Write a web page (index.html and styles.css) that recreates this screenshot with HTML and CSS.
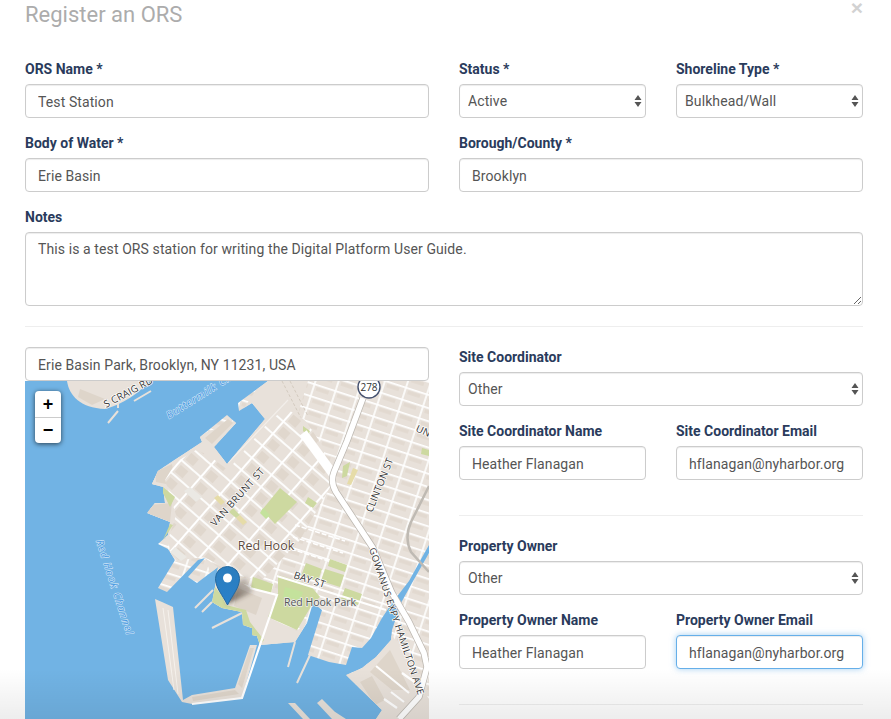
FILE: index.html
```html
<!DOCTYPE html>
<html lang="en">
<head>
<meta charset="utf-8">
<title>Register an ORS</title>
<link rel="stylesheet" href="styles.css">
</head>
<body>
<main class="modal">
  <header class="modal-head">
    <h1 class="title">Register an ORS</h1>
    <span class="close">×</span>
  </header>
  <form class="form">
    <div class="cols">
      <div class="field"><label class="label">ORS Name *</label><input class="control" value="Test Station" readonly></div>
      <div class="cols-sub">
        <div class="field"><label class="label">Status *</label><select class="control picker"><option>Active</option></select></div>
        <div class="field"><label class="label">Shoreline Type *</label><select class="control picker"><option>Bulkhead/Wall</option></select></div>
      </div>
      <div class="field"><label class="label">Body of Water *</label><input class="control" value="Erie Basin" readonly></div>
      <div class="field"><label class="label">Borough/County *</label><input class="control" value="Brooklyn" readonly></div>
    </div>
    <div class="field"><label class="label">Notes</label><textarea class="control notes" readonly>This is a test ORS station for writing the Digital Platform User Guide.</textarea></div>
    <hr class="rule">
    <div class="cols">
      <div class="map-col">
        <input class="control" value="Erie Basin Park, Brooklyn, NY 11231, USA" readonly>
        <div class="map">
          <svg class="map-svg" viewBox="25 381 404 338" width="404" height="338" xmlns="http://www.w3.org/2000/svg" aria-label="Map of Red Hook, Brooklyn">
            <defs>
              <pattern id="gridEast" width="22" height="12.5" patternUnits="userSpaceOnUse" patternTransform="translate(310 395) rotate(18)">
                <rect width="22" height="12.5" fill="#e8e1da"/>
                <rect x="4" y="3" width="13" height="3.5" fill="#e2d9d0"/>
                <path d="M0 0.8H22M1 0V12.5" stroke="#fff" stroke-width="1.6" fill="none"/>
              </pattern>
              <pattern id="gridWest" width="16" height="26" patternUnits="userSpaceOnUse" patternTransform="translate(240 470) rotate(-49)">
                <rect width="16" height="26" fill="#e8e1da"/>
                <rect x="4" y="4" width="9" height="10" fill="#e0d7cd"/>
                <path d="M0 1H16M1 0V26" stroke="#fff" stroke-width="1.8" fill="none"/>
              </pattern>
              <linearGradient id="pinFill" x1="0" y1="0" x2="0" y2="1">
                <stop offset="0" stop-color="#2b7dbd"/>
                <stop offset="1" stop-color="#2a81cb"/>
              </linearGradient>
              <linearGradient id="shadowFill" x1="0" y1="1" x2="1" y2="0">
                <stop offset="0" stop-color="#3b3025" stop-opacity=".75"/>
                <stop offset="1" stop-color="#3b3025" stop-opacity=".1"/>
              </linearGradient>
              <filter id="soft" x="-30%" y="-30%" width="160%" height="160%"><feGaussianBlur stdDeviation="2"/></filter>
              <clipPath id="landClip">
                <path d="M268 381L238 403L239 411L252 403L265 419L227 464L214 447L236 423L227 415L200 437L202 442L173 461L158 471L152 484L163 487L165 503L155 503L147 513L170 522L168 535L158 544L168 549L175 560L158 588L167 592L198 560L205 558L188 577L197 583L218 567L215 587L212 602L222 608L242 612L243 625L252 628L252 635L257 636L260 645L295 642L307 623L313 603L322 610L308 655L329 662L346 665L352 647L362 648L371 638L382 618L392 603L409 581L425 552L429 545V381Z"/>
                <path d="M429 553L412 583L401 603L392 630L391 640L376 657L362 668L346 675L382 710L376 719H429Z"/>
              </clipPath>
            </defs>
            <rect x="25" y="381" width="404" height="338" fill="#71b3e4"/>

            <path class="land" d="M67 381C69 395 80 408 105 409C122 405 140 392 150 381Z"/>
            <path class="dock" d="M80 389L105 399L92 405L78 397Z"/>
            <path class="pier-thin" d="M108 423L118 411M134 401L151 391M118 400L118 408"/>

            <g clip-path="url(#landClip)">
              <rect x="25" y="381" width="404" height="338" fill="url(#gridEast)"/>
              <path class="pale" d="M262 381H308L296 420L285 430L228 480L176 470L150 490L150 470L200 435L236 420Z"/>
              <path class="rail" d="M282 381L301 418M290 381L308 416"/>
              <path class="dock" d="M250 421L228 452L222 446L243 420ZM205 438L228 419L233 423L212 444Z"/>
              <path class="outline" d="M216 447L229 462L288 400"/>
              <path class="pale" d="M176 470L150 480V520L172 545L178 470Z"/>
              <path class="dock" d="M155 472L172 464L176 486L156 482ZM148 505L172 503L170 522L148 514Z"/>
              <path fill="url(#gridWest)" d="M305 420L322 445L333 482L300 540L262 580L235 575L205 557L172 561L168 540L176 515L165 480L176 462L196 450L208 455L228 470L266 425L285 408Z"/>
              <path class="pale" d="M205 558L222 570L250 588L277 595L268 617L297 631L308 620L295 644L258 648L240 614L212 605L215 585Z"/>
              <path class="dock" d="M238 588L262 598L256 615L234 606Z"/>
              <path class="pale" d="M346 675L362 668L392 635L420 680L429 700V719H376Z"/>
              <path class="dock" d="M370 672L390 650L410 690L392 690ZM360 682L372 676L385 700L375 705Z"/>
              <path class="road" d="M376 666L409 693M402 673L416 683M391 692L404 702M384 699L397 708"/>
            </g>

            <path class="land" d="M155 599L162 602L173 607L183 700L192 695L235 688L250 645L257 645L242 698L192 704L182 702L168 680Z"/>
            <path class="stripe" d="M163 608L174 690M168 610L178 694"/>
            <path class="dock" d="M192 697L235 690L239 694L193 701ZM238 684L250 648L254 648L242 688Z"/>
            <path class="land" d="M288 703L295 703L310 719H303ZM317 703L322 699L342 719H332ZM329 708L346 719H336Z"/>
            <path class="pier-thin" d="M295 642L288 667M310 655L297 683M195 608L213 590M202 612L212 602M212 628L242 613"/>

            <path class="dashed" d="M295 525L345 541M293 537L343 553M291 549L341 565"/>
            <path class="grey-block" d="M190 487L202 497L196 502L184 491ZM175 547L187 557L181 561L170 552Z"/>
            <path class="park" d="M280 488L297 502L275 524L262 510Z"/>
            <path class="park-light" d="M263 508L270 515L266 519L260 513Z"/>
            <path class="park" d="M163 487L175 497L170 507L163 493ZM170 524L173 525L163 540ZM233 508L240 515L236 518L229 512ZM308 497L317 503L313 508L305 503ZM253 577L273 584L271 593L251 588ZM306 563L322 569L318 581L301 576ZM325 569L344 575L340 587L321 581ZM345 588L362 594L358 605L341 599ZM330 559L347 565L345 572L328 566ZM303 426L310 431L308 436L303 431ZM343 466L350 462L347 476L342 478ZM422 448L429 450V456L421 454Z"/>
            <path class="parkish" d="M218 495L225 502L221 505L214 498ZM240 515L247 522L243 525L236 518ZM353 468L358 470L351 485L347 484Z"/>
            <path class="park" d="M278 575L310 585L320 597L313 603L297 630L268 617L278 593Z"/>
            <path class="park-light" d="M285 587L303 592L300 600L283 597Z"/>
            <path class="park" d="M215 587L212 602L222 608L242 612L243 625L252 628L252 635L257 636L260 645L264 640L250 622L246 610L226 605L222 596Z"/>
            <path class="road" d="M250 588L277 595L242 698L192 704M277 576L386 610"/>

            <path class="rail-wide" d="M429 486L411 522Q404 538 411 552L429 572"/>
            <path class="ramp" d="M303 433L333 474"/>
            <path class="highway-edge" d="M363 398L347 441L334 472Q330 482 336 492L373 548L392 593L409 622L424 653L427 667L419 697L399 719"/>
            <path class="highway" d="M363 398L347 441L334 472Q330 482 336 492L373 548L392 593L409 622L424 653L427 667L419 697L399 719"/>

            <circle cx="369" cy="387" r="11" fill="#fff" stroke="#44506e" stroke-width="1.4"/>
            <text class="shield" x="369" y="391">278</text>
            <text class="street" transform="translate(106 408) rotate(-28)">S CRAIG RD</text>
            <text class="water" transform="translate(169 419) rotate(-32)">Buttermilk Channel</text>
            <text class="street street-mid" transform="translate(215 527) rotate(-48)">VAN BRUNT ST</text>
            <text class="street" transform="translate(372 513) rotate(-68)">CLINTON ST</text>
            <text class="street" transform="translate(415 431) rotate(25)">UNION ST</text>
            <text class="place" x="266" y="550">Red Hook</text>
            <text class="street" transform="translate(293 578) rotate(18)">BAY ST</text>
            <text class="park-name" x="320" y="606">Red Hook Park</text>
            <text class="water" transform="translate(96 541) rotate(72)">Red Hook Channel</text>
            <text class="street street-wide" transform="translate(369 549) rotate(71.5)">GOWANUS EXPY HAMILTON AVE</text>

            <path class="pin-shadow" filter="url(#soft)" d="M227 604L253 592L246 577L228 588Z"/>
            <path class="pin" d="M227.5 605C222 594 215.500 588 215.500 578.500A12 12 0 0 1 239.500 578.500C239.500 588 233 594 227.500 605Z"/>
            <circle cx="227.500" cy="578" r="4.500" fill="#fff"/>
          </svg>
          <div class="zoom-ctl">
            <span class="zoom-btn">+</span>
            <span class="zoom-btn">−</span>
          </div>
        </div>
      </div>
      <div class="contacts">
        <div class="field"><label class="label">Site Coordinator</label><select class="control picker"><option>Other</option></select></div>
        <div class="cols-sub">
          <div class="field"><label class="label">Site Coordinator Name</label><input class="control" value="Heather Flanagan" readonly></div>
          <div class="field"><label class="label">Site Coordinator Email</label><input class="control" value="hflanagan@nyharbor.org" readonly></div>
        </div>
        <hr class="rule">
        <div class="field"><label class="label">Property Owner</label><select class="control picker"><option>Other</option></select></div>
        <div class="cols-sub">
          <div class="field"><label class="label">Property Owner Name</label><input class="control" value="Heather Flanagan" readonly></div>
          <div class="field"><label class="label">Property Owner Email</label><input class="control focused" value="hflanagan@nyharbor.org" readonly></div>
        </div>
        <hr class="rule">
      </div>
    </div>
  </form>
</main>
<div class="fade"></div>
</body>
</html>
```
FILE: styles.css
```css
* { box-sizing: border-box; }
html, body { margin: 0; height: 719px; overflow: hidden; background: #fff; }
body { font-family: Roboto, "Liberation Sans", sans-serif; font-size: 14px; color: #555; }

.modal { padding: 0 28px 0 25px; }
.modal-head { display: flex; justify-content: space-between; align-items: flex-start; height: 59px; }
.title { margin: 4px 0 0; font-size: 22px; line-height: 22px; font-weight: 400; color: #acacac; }
.close { font-size: 21px; line-height: 16px; font-weight: 700; color: #d2d2d2; font-family: "Liberation Sans", sans-serif; }

.cols { display: grid; grid-template-columns: 404px 404px; column-gap: 30px; }
.cols-sub { display: grid; grid-template-columns: 187px 187px; column-gap: 30px; }
.field { margin-bottom: 15px; min-width: 0; }
.label { display: block; height: 20px; line-height: 20px; margin-bottom: 5px; font-weight: 700; color: #2a3b5c; }

.control {
  display: block; width: 100%; height: 34px; padding: 7px 12px 5px;
  font: 14px/20px Roboto, "Liberation Sans", sans-serif; letter-spacing: .1px; color: #555; background: #fff;
  border: 1px solid #ccc; border-radius: 4px; box-shadow: inset 0 1px 1px rgba(0, 0, 0, .075); outline: 0;
}
.picker {
  appearance: none; -webkit-appearance: none; padding: 5px 20px 5px 8px;
  background-image: url("data:image/svg+xml,%3Csvg xmlns='http://www.w3.org/2000/svg' width='8' height='12'%3E%3Cpath d='M4 0L7.500 5H.5ZM4 12L.5 7H7.500Z' fill='%23555'/%3E%3C/svg%3E");
  background-repeat: no-repeat; background-position: right 3px center;
}
.notes { height: 74px; padding-top: 6px; resize: vertical; overflow: auto; }
.focused { border-color: #66afe9; box-shadow: inset 0 1px 1px rgba(0, 0, 0, .075), 0 0 6px rgba(102, 175, 233, .6); }

.rule { border: 0; border-top: 1px solid #eee; margin: 20px 0; }
.contacts .cols-sub + .rule { margin-top: 20px; }

.map-col { min-width: 0; }
.map { position: relative; height: 338px; overflow: hidden; }
.map-svg { display: block; font-family: "Open Sans", "Noto Sans", sans-serif; }

.land { fill: #e8e1da; }
.dock { fill: #ded5ca; }
.pale { fill: #e8e1da; }
.park { fill: #cdd9a0; }
.parkish { fill: #e6dca8; }
.park-light { fill: #c4e29c; }
.grey-block { fill: #ebe9e4; }
.pier-thin { fill: none; stroke: #e8e1da; stroke-width: 2; }
.stripe { fill: none; stroke: #f6f2ed; stroke-width: 1; }
.outline { fill: none; stroke: #f2eeea; stroke-width: 1.200; }
.rail { fill: none; stroke: #d3cabf; stroke-width: 1; stroke-dasharray: 3 2; }
.rail-wide { fill: none; stroke: #bfbab3; stroke-width: 2.500; }
.road { fill: none; stroke: #fff; stroke-width: 2.200; }
.dashed { fill: none; stroke: #fff; stroke-width: 1.500; stroke-dasharray: 5 2; }
.ramp { fill: none; stroke: #fff; stroke-width: 9; }
.highway { fill: none; stroke: #fff; stroke-width: 5.500; stroke-linejoin: round; }
.highway-edge { fill: none; stroke: #bcb7b0; stroke-width: 7; stroke-linejoin: round; }

.map-svg text { paint-order: stroke; stroke-linejoin: round; }
.street { font-size: 10px; fill: #333; stroke: #fff; stroke-width: 1.500px; letter-spacing: .1px; }
.street-mid { letter-spacing: .5px; }
.street-wide { font-size: 9.500px; letter-spacing: .45px; }
.shield { font-size: 10px; fill: #333; text-anchor: middle; }
.place { font-size: 12.500px; fill: #5e4c3e; stroke: #fff; stroke-width: 1.500px; text-anchor: middle; }
.park-name { font-size: 10.500px; fill: #555; stroke: #eee; stroke-width: 1.500px; text-anchor: middle; }
.water { font-size: 10px; font-style: italic; letter-spacing: 1.200px; fill: #3f94e0; stroke: #cfe5f7; stroke-width: 1.200px; }

.pin { fill: url(#pinFill); stroke: #25699f; stroke-width: 1; }
.pin-shadow { fill: url(#shadowFill); }

.zoom-ctl {
  position: absolute; left: 10px; top: 10px; width: 26px; height: 52px;
  display: flex; flex-direction: column; background: #fff; border-radius: 4px;
  box-shadow: 0 1px 5px rgba(0, 0, 0, .65);
}
.zoom-btn {
  flex: 1; display: flex; align-items: center; justify-content: center;
  font: 700 18px/1 "Liberation Sans", sans-serif; color: #000;
}
.zoom-btn + .zoom-btn { border-top: 1px solid #ccc; }

.fade {
  position: absolute; left: 0; right: 0; bottom: 0; height: 50px; pointer-events: none;
  background: linear-gradient(to bottom, rgba(0, 0, 0, 0), rgba(0, 0, 0, .07));
}
```
